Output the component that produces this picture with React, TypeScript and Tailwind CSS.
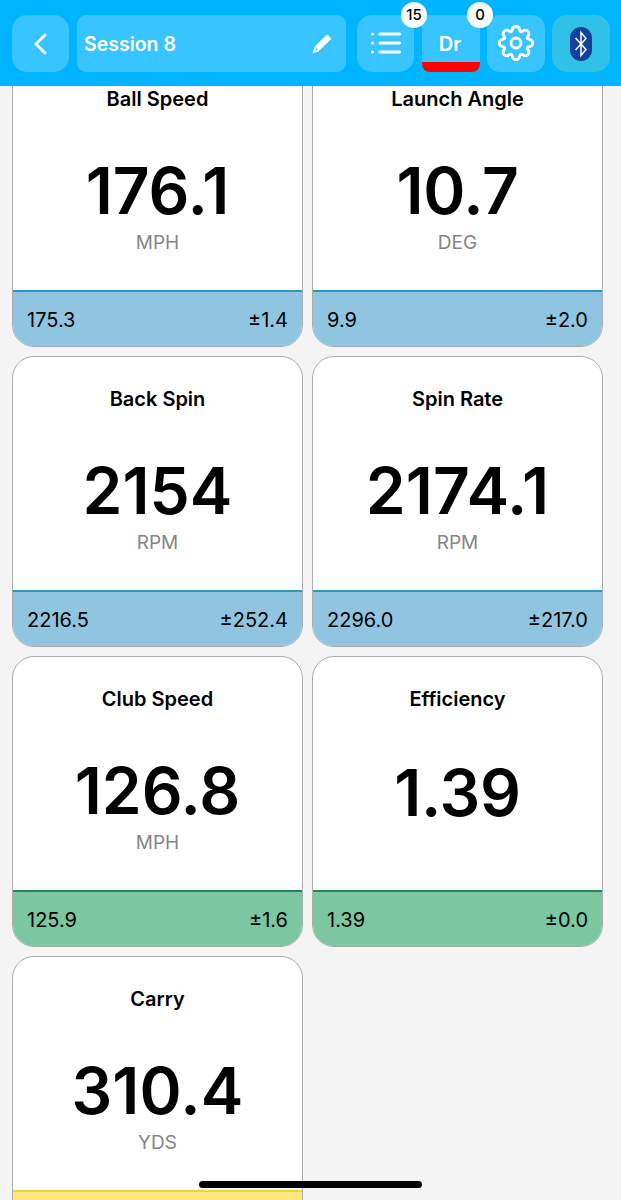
import { ReactNode } from "react";

type Metric = {
  name: string;
  value: string;
  unit?: string;
  average?: string;
  deviation?: string;
  footer: string;
  tracking: string;
};

const blue = "bg-[#8fc5e1] border-[#2f97bd]";
const green = "bg-[#7cc6a1] border-[#238559]";
const yellow = "bg-[#fee781] border-[#f6cf35]";

const metrics: Metric[] = [
  { name: "Ball Speed", value: "176.1", unit: "MPH", average: "175.3", deviation: "±1.4", footer: blue, tracking: "tracking-normal" },
  { name: "Launch Angle", value: "10.7", unit: "DEG", average: "9.9", deviation: "±2.0", footer: blue, tracking: "tracking-[-0.3px]" },
  { name: "Back Spin", value: "2154", unit: "RPM", average: "2216.5", deviation: "±252.4", footer: blue, tracking: "tracking-normal" },
  { name: "Spin Rate", value: "2174.1", unit: "RPM", average: "2296.0", deviation: "±217.0", footer: blue, tracking: "tracking-[0.2px]" },
  { name: "Club Speed", value: "126.8", unit: "MPH", average: "125.9", deviation: "±1.6", footer: green, tracking: "tracking-normal" },
  { name: "Efficiency", value: "1.39", average: "1.39", deviation: "±0.0", footer: green, tracking: "tracking-[-0.3px]" },
  { name: "Carry", value: "310.4", unit: "YDS", footer: yellow, tracking: "tracking-[0.2px]" },
];

const Badge = ({ children }: { children: ReactNode }) => (
  <span className="absolute -top-[13px] -right-[13px] z-10 flex size-[26px] items-center justify-center rounded-full bg-white text-[15px] font-medium text-black">
    {children}
  </span>
);

const MetricCard = ({ metric }: { metric: Metric }) => (
  <div className="flex h-[291px] flex-col overflow-hidden rounded-[22px] border border-[#acacac] bg-white text-center">
    <h2 className="mt-[30px] h-6 text-[20px] leading-6 font-semibold">{metric.name}</h2>
    <p
      className={`h-16 text-[64px] leading-[64px] font-semibold ${metric.tracking} ${
        metric.unit ? "mt-12" : "mt-[50px]"
      }`}
    >
      {metric.value}
    </p>
    {metric.unit && (
      <p className="mt-2 h-6 text-[19px] leading-6 text-[#858585]">{metric.unit}</p>
    )}
    <div
      className={`mt-auto flex h-14 items-center justify-between border-t-2 px-[14px] pt-px text-[20px] ${metric.footer}`}
    >
      {metric.average && <span>{metric.average}</span>}
      {metric.deviation && <span>{metric.deviation}</span>}
    </div>
  </div>
);

const App = () => {
  return (
    <div className="flex h-[1200px] w-[621px] flex-col overflow-hidden bg-[#f4f4f4] font-['Inter','Liberation_Sans',sans-serif] text-black">
      <header className="flex h-[86px] shrink-0 items-start bg-[#00b4ff] pt-[15px] pl-3 text-white">
        <button className="flex size-[57px] items-center justify-center rounded-[15px] bg-[#38c4ff]">
          <svg width="14" height="22" viewBox="0 0 14 22" fill="none" stroke="currentColor" strokeWidth="2.8" strokeLinecap="round" strokeLinejoin="round">
            <path d="M11 2 L2 11 L11 20" />
          </svg>
        </button>

        <div className="ml-2 flex h-[57px] w-[269px] items-center justify-between rounded-[9px] bg-[#38c4ff] pr-[14px] pl-[7px]">
          <span className="pt-[2px] text-[19.5px] font-semibold">Session 8</span>
          <svg width="20" height="20" viewBox="0 0 20 20" fill="currentColor">
            <path fillRule="evenodd" d="M14.4 1.1 Q15.2 .4 16 1.1 L18.7 4.1 Q19.4 4.9 18.7 5.6 L7.6 16.2 Q6.8 17 5.6 17.4 L1.6 18.9 Q.5 19.1 .9 17.9 L2.3 14.1 Q2.6 12.7 3.5 11.7 Z M4.6 14.4 A1.1 1.1 0 1 0 4.6 16.6 A1.1 1.1 0 1 0 4.6 14.4 Z" />
          </svg>
        </div>

        <button className="relative ml-[11px] flex size-[57px] items-center justify-center rounded-[15px] bg-[#38c4ff]">
          <svg width="32" height="24" viewBox="0 0 32 24" className="-mt-[2px]" fill="none" stroke="currentColor" strokeWidth="3" strokeLinecap="round">
            <path d="M10 3 H29.5 M10 12 H29.5 M10 21 H29.5" />
            <path d="M2.5 3 h.01 M2.5 12 h.01 M2.5 21 h.01" />
          </svg>
          <Badge>15</Badge>
        </button>

        <button className="relative ml-2 h-[57px] w-[58px]">
          <span className="flex h-full items-center justify-center overflow-hidden rounded-[8px] border-b-[10px] border-[#fe0000] bg-[#38c4ff] pt-[10px] pr-[2px] text-[20px] font-semibold">
            Dr
          </span>
          <Badge>0</Badge>
        </button>

        <button className="ml-[7px] flex h-[57px] w-[58px] items-center justify-center rounded-[13px] bg-[#38c4ff]">
          <svg width="38" height="38" viewBox="0 0 38 38" fill="none" stroke="currentColor" strokeWidth="2.8" strokeLinejoin="round" className="-mt-px -ml-px">
            <path d="M15.2 6.2 C16.1 1 21.9 1 22.8 6.2 C23 7.7 24.1 8.2 25.4 7.3 C29.7 4.2 33.8 8.3 30.7 12.6 C29.8 13.9 30.3 15 31.8 15.2 C37 16.1 37 21.9 31.8 22.8 C30.3 23 29.8 24.1 30.7 25.4 C33.8 29.7 29.7 33.8 25.4 30.7 C24.1 29.8 23 30.3 22.8 31.8 C21.9 37 16.1 37 15.2 31.8 C15 30.3 13.9 29.8 12.6 30.7 C8.3 33.8 4.2 29.7 7.3 25.4 C8.2 24.1 7.7 23 6.2 22.8 C1 21.9 1 16.1 6.2 15.2 C7.7 15 8.2 13.9 7.3 12.6 C4.2 8.3 8.3 4.2 12.6 7.3 C13.9 8.2 15 7.7 15.2 6.2 Z" />
            <circle cx="19" cy="19" r="5" />
          </svg>
        </button>

        <button className="ml-[7px] flex h-[57px] w-[58px] items-center justify-center rounded-[15px] bg-[#2fc1e6]">
          <svg width="22" height="34" viewBox="0 0 22 34" fill="none">
            <rect width="22" height="34" rx="11" fill="#14429a" />
            <path d="M5.5 11 L16 22.5 L11 28.5 V5.5 L16 11.5 L5.5 23" stroke="#fff" strokeWidth="1.5" />
          </svg>
        </button>
      </header>

      <main className="flex-1 overflow-hidden">
        <div className="-mt-[30px] grid grid-cols-[291px_291px] gap-[9px] pl-3">
          {metrics.map((metric) => (
            <MetricCard key={metric.name} metric={metric} />
          ))}
        </div>
      </main>

      {/* home indicator */}
      <div className="absolute top-[1181px] left-[199px] h-[7px] w-[223px] rounded-full bg-black" />
    </div>
  );
};

export default App;
